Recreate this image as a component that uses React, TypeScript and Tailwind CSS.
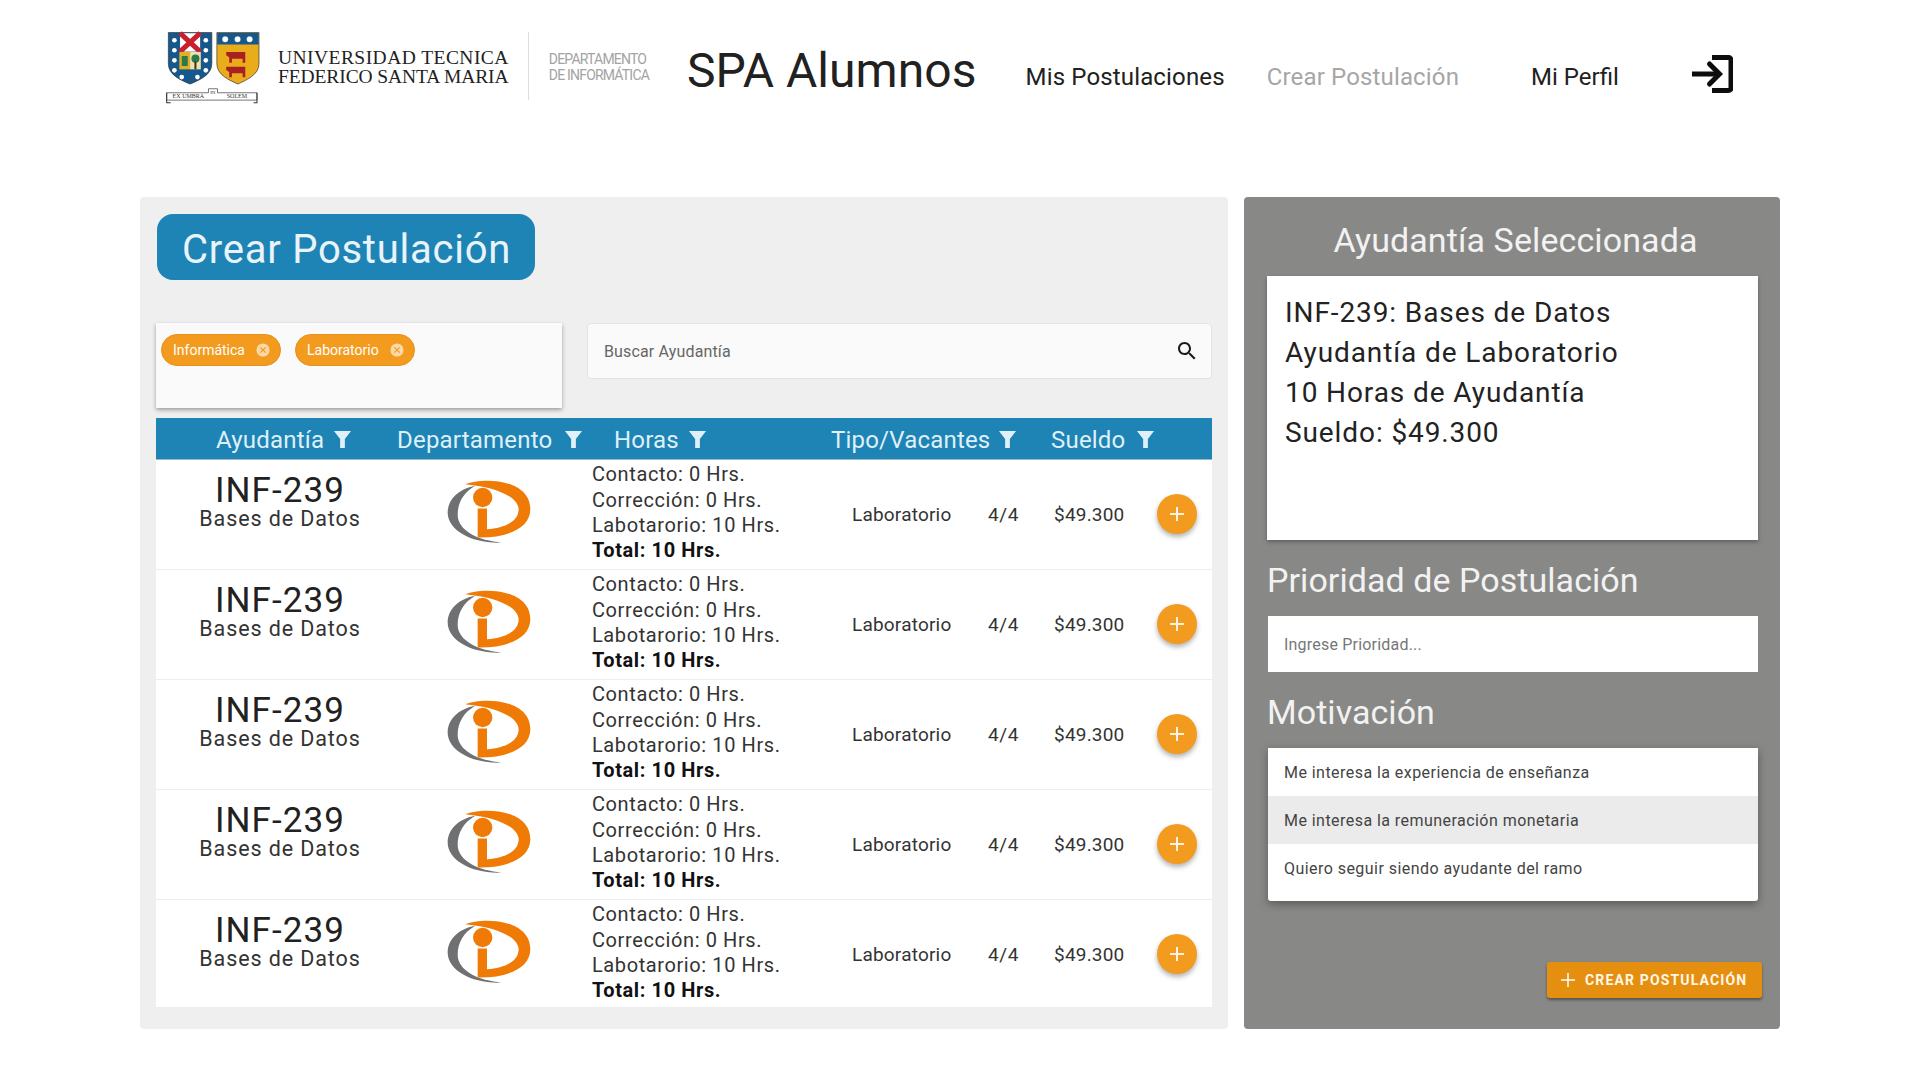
import React from "react";
import { Plus } from "lucide-react";

function UsmLogo() {
  const dots = [[43,45],[43,75],[43,105],[43,135],[137,45],[137,75],[137,105],[137,135],[65,155],[112,155]];
  return (
    <svg viewBox="15 15 290 220" className="w-[97px] h-[74px] shrink-0 -mt-[2px]">
      <path d="M25 22H155V115C155 150 115 165 90 176C65 165 25 150 25 115Z" fill="#17588c" stroke="#333" strokeWidth="2" />
      <rect x="60" y="24" width="60" height="55" fill="#fff" />
      <path d="M60 24L120 79M120 24L60 79" stroke="#c8202f" strokeWidth="15" />
      <rect x="58" y="80" width="32" height="52" fill="#e4b020" />
      <rect x="90" y="80" width="32" height="52" fill="#f0e2b0" />
      <rect x="65" y="92" width="18" height="30" fill="#2c7a4a" />
      <circle cx="106" cy="100" r="12" fill="#2c7a4a" />
      <rect x="103" y="108" width="6" height="24" fill="#44321c" />
      {dots.map((d, i) => (<circle key={i} cx={d[0]} cy={d[1]} r="7" fill="#fff" />))}
      <path d="M170 22H296V115C296 150 255 165 233 176C210 165 170 150 170 115Z" fill="#e9ad1c" stroke="#333" strokeWidth="2" />
      <path d="M171 23H295V58H171Z" fill="#17588c" />
      {[195,232,268].map((x) => (<circle key={x} cx={x} cy="42" r="9" fill="#fff" stroke="#17588c" strokeDasharray="3 2" />))}
      <path d="M198 80H255V112H247V100H215V112H207V96L198 90Z" fill="#a82020" />
      <path d="M198 124H255V156H247V144H215V156H207V140L198 134Z" fill="#a82020" />
      <path d="M20 202H145V190H172V202H290V224H20Z" fill="#fff" stroke="#333" strokeWidth="2" />
      <path d="M20 202V232H32M290 202V232H280" fill="none" stroke="#333" strokeWidth="3" />
      <text x="85" y="219" fontSize="18" fontFamily="'Liberation Serif', serif" textAnchor="middle" fill="#333">EX UMBRA</text>
      <text x="158" y="207" fontSize="15" fontFamily="'Liberation Serif', serif" textAnchor="middle" fill="#333">IN</text>
      <text x="230" y="219" fontSize="18" fontFamily="'Liberation Serif', serif" textAnchor="middle" fill="#333">SOLEM</text>
    </svg>
  );
}

function DiLogo() {
  return (
    <svg viewBox="80 118 252 194" className="w-[84px] h-[65px]">
      <path d="M165 135C110 145 82 180 82 215C82 270 160 310 245 305C175 300 112 270 112 222C112 185 130 155 165 135Z" fill="#6f7072" />
      <path d="M135 130C190 108 330 115 330 205C330 262 260 292 172 290V203H200V265C255 262 295 240 295 205C293 170 235 140 135 130Z" fill="#ef7a05" />
      <circle cx="187" cy="170" r="29" fill="#ef7a05" />
    </svg>
  );
}

function Filter() {
  return (
    <svg viewBox="0 0 20 20" className="w-[19px] h-[19px] shrink-0" fill="#dff0f8">
      <path d="M1 1H19L12.5 9.5V19H7.5V9.5Z" />
    </svg>
  );
}

function Chip({ label }: { label: string }) {
  return (
    <div className="flex items-center h-8 w-[120px] rounded-full bg-[#f39b1f] border border-[#e4921c] pl-[11px] text-[14px] text-white">
      <span className="flex-1">{label}</span>
      <svg viewBox="0 0 16 16" className="w-[14px] h-[14px] mr-[10px]">
        <circle cx="8" cy="8" r="7.5" fill="#fad9a8" />
        <path d="M5 5L11 11M11 5L5 11" stroke="#f39b1f" strokeWidth="1.5" />
      </svg>
    </div>
  );
}

function Row() {
  return (
    <div className="flex items-center h-[110px] shrink-0 border-b border-[#eeeeee] bg-white text-[#212121]">
      <div className="w-[248px] flex flex-col items-center -mt-[24px]">
        <span className="text-[35px] leading-[34px] tracking-[1.1px]">INF-239</span>
        <span className="text-[21.5px] leading-[24px] -mt-px tracking-[0.9px] text-[#333]">Bases de Datos</span>
      </div>
      <div className="w-[170px] flex justify-center -mt-[5px]">
        <DiLogo />
      </div>
      <div className="w-[278px] pl-[18px] -mt-[3px] text-[20px] leading-[25.3px] tracking-[0.6px] text-[#333] whitespace-nowrap">
        <div>Contacto: 0 Hrs.</div>
        <div>Corrección: 0 Hrs.</div>
        <div>Labotarorio: 10 Hrs.</div>
        <div className="font-bold text-[#111]">Total: 10 Hrs.</div>
      </div>
      <div className="w-[136px] mt-[1px] text-[19px] tracking-[0.2px] text-[#333]">Laboratorio</div>
      <div className="w-[66px] mt-[1px] text-[19px] tracking-[0.6px] text-[#333]">4/4</div>
      <div className="w-[103px] mt-[1px] text-[19px] tracking-[0.2px] text-[#333]">$49.300</div>
      <div className="w-10 h-10 -mt-[2px] rounded-full bg-[#f39b1f] flex items-center justify-center shadow-[0_3px_5px_rgba(0,0,0,0.3)]">
        <Plus size={24} color="#fdf3e0" strokeWidth={2} strokeLinecap="butt" />
      </div>
    </div>
  );
}

function HeadCell({ label, className }: { label: string; className: string }) {
  return (
    <div className={`flex items-center ${className}`}>
      <span>{label}</span>
      <Filter />
    </div>
  );
}

export default function App() {
  return (
    <div className="w-[1920px] h-[1080px] bg-white font-['Roboto',sans-serif] flex flex-col">
      <header className="h-[197px] pl-[165px] pt-[32px] flex items-start">
        <UsmLogo />
        <div className="ml-[16px] mt-[16px] font-['Liberation_Serif',serif] leading-[19px] text-[#222] whitespace-nowrap">
          <div className="text-[19.5px] tracking-[0.45px]">UNIVERSIDAD TECNICA</div>
          <div className="text-[19.5px] tracking-[-0.1px]">FEDERICO SANTA MARIA</div>
        </div>
        <div className="ml-[19px] w-px h-[68px] bg-[#dddddd]" />
        <div className="ml-[20px] mt-[19px] text-[14px] leading-[16px] tracking-[-0.8px] text-[#a3a3a3] whitespace-nowrap">
          <div>DEPARTAMENTO</div>
          <div>DE INFORMÁTICA</div>
        </div>
        <div className="ml-[38px] mt-[9px] text-[48px] leading-[60px] tracking-[0.05px] text-[#212121] whitespace-nowrap">SPA Alumnos</div>
        <nav className="mt-[29px] text-[24px] leading-[32px] tracking-[0.15px] flex whitespace-nowrap">
          <span className="ml-[49px] text-[#212121]">Mis Postulaciones</span>
          <span className="ml-[42px] text-[#a6a6a6]">Crear Postulación</span>
          <span className="ml-[72px] text-[#212121] tracking-[0px]">Mi Perfil</span>
        </nav>
        <svg viewBox="0 0 41 38" className="ml-[73px] mt-[23px] w-[41px] h-[38px]" fill="none" stroke="#0d0d0d" strokeWidth="5">
          <path d="M0 19H27" />
          <path d="M17.5 9L27.5 19L17.5 29" strokeLinecap="round" />
          <path d="M20 2.5H36.5A2.5 2.5 0 0 1 39 5V33A2.5 2.5 0 0 1 36.5 35.5H20" />
        </svg>
      </header>

      <main className="flex pl-[140px] gap-[16px] items-start">
        <section className="w-[1088px] h-[832px] bg-[#efefef] rounded-[4px] pl-[16px] pr-[16px] pt-[17px]">
          <div className="w-[378px] h-[66px] ml-[1px] rounded-[16px] bg-[#1e84b5] flex items-center pl-[25px] pt-[5px] text-[40px] tracking-[0.75px] text-[#e8f4fa]">
            Crear Postulación
          </div>
          <div className="flex mt-[43px] gap-[25px] items-start">
            <div className="w-[406px] h-[85px] bg-[#fafafa] shadow-[0_2px_4px_rgba(0,0,0,0.35)] flex items-start gap-[14px] pt-[11px] pl-[5px]">
              <Chip label="Informática" />
              <Chip label="Laboratorio" />
            </div>
            <div className="w-[625px] h-[56px] bg-[#fafafa] border border-[#e4e4e4] rounded-[4px] flex items-center pl-[16px] pr-[12px]">
              <span className="flex-1 mt-[1px] text-[16px] tracking-[0.15px] text-[#666]">Buscar Ayudantía</span>
              <svg viewBox="0 0 24 24" className="w-6 h-6" fill="#1a1a1a">
                <path d="M15.5 14h-.79l-.28-.27C15.41 12.59 16 11.11 16 9.5 16 5.91 13.09 3 9.5 3S3 5.91 3 9.5 5.91 16 9.5 16c1.61 0 3.09-.59 4.23-1.57l.27.28v.79l5 4.99L20.49 19l-4.99-5zm-6 0C7.01 14 5 11.99 5 9.5S7.01 5 9.5 5 14 7.01 14 9.5 11.99 14 9.5 14z" />
              </svg>
            </div>
          </div>
          <div className="w-[1056px] h-[42px] mt-[10px] pt-[2px] bg-[#1e84b5] border-b border-[#9db8c4] flex items-center text-[24px] tracking-[0.2px] text-[#dff0f8] whitespace-nowrap">
            <HeadCell label="Ayudantía" className="ml-[60px] w-[181px] gap-[9px]" />
            <HeadCell label="Departamento" className="w-[217px] gap-[12px]" />
            <HeadCell label="Horas" className="w-[217px] gap-[9px]" />
            <HeadCell label="Tipo/Vacantes" className="w-[220px] gap-[8px]" />
            <HeadCell label="Sueldo" className="gap-[11px]" />
          </div>
          <div className="w-[1056px] h-[547px] overflow-hidden flex flex-col">
            <Row />
            <Row />
            <Row />
            <Row />
            <Row />
          </div>
        </section>

        <aside className="w-[536px] h-[832px] bg-[#888886] rounded-[4px] pl-[23px] pr-[22px]">
          <h2 className="pt-[23px] pl-[6px] h-[79px] text-center text-[34px] leading-[40px] tracking-[0.1px] text-[#f2f2f2]">Ayudantía Seleccionada</h2>
          <div className="w-[491px] h-[264px] bg-white shadow-[0_2px_4px_rgba(0,0,0,0.3)] pl-[18px] pt-[17px] text-[28px] leading-[40px] tracking-[0.9px] text-[#222]">
            <div>INF-239: Bases de Datos</div>
            <div>Ayudantía de Laboratorio</div>
            <div>10 Horas de Ayudantía</div>
            <div>Sueldo: $49.300</div>
          </div>
          <h3 className="mt-[18px] text-[34px] leading-[44px] tracking-[0.05px] text-[#f2f2f2]">Prioridad de Postulación</h3>
          <div className="mt-[14px] ml-px w-[490px] h-[56px] bg-white flex items-center pl-[16px] pt-[2px] text-[16px] tracking-[0.2px] text-[#777]">Ingrese Prioridad...</div>
          <h3 className="mt-[18px] text-[34px] leading-[44px] tracking-[0.05px] text-[#f2f2f2]">Motivación</h3>
          <div className="mt-[14px] ml-px w-[490px] h-[153px] bg-white rounded-b-[3px] shadow-[0_3px_8px_rgba(0,0,0,0.35)] text-[16px] tracking-[0.45px] text-[#444]">
            <div className="h-[48px] flex items-center pl-[16px] pt-[2px]">Me interesa la experiencia de enseñanza</div>
            <div className="h-[48px] flex items-center pl-[16px] pt-[2px] bg-[#ebebeb]">Me interesa la remuneración monetaria</div>
            <div className="h-[48px] flex items-center pl-[16px] pt-[2px]">Quiero seguir siendo ayudante del ramo</div>
          </div>
          <div className="flex justify-end mt-[61px] -mr-[4px]">
            <div className="w-[215px] h-[36px] bg-[#e58f10] rounded-[3px] shadow-[0_2px_3px_rgba(0,0,0,0.4)] flex items-center pl-[9px] gap-[5px] text-[14px] font-bold tracking-[1.15px] text-[#fff6e6] whitespace-nowrap">
              <Plus size={24} color="#fff" strokeWidth={1.5} strokeLinecap="butt" />
              CREAR POSTULACIÓN
            </div>
          </div>
        </aside>
      </main>
    </div>
  );
}
